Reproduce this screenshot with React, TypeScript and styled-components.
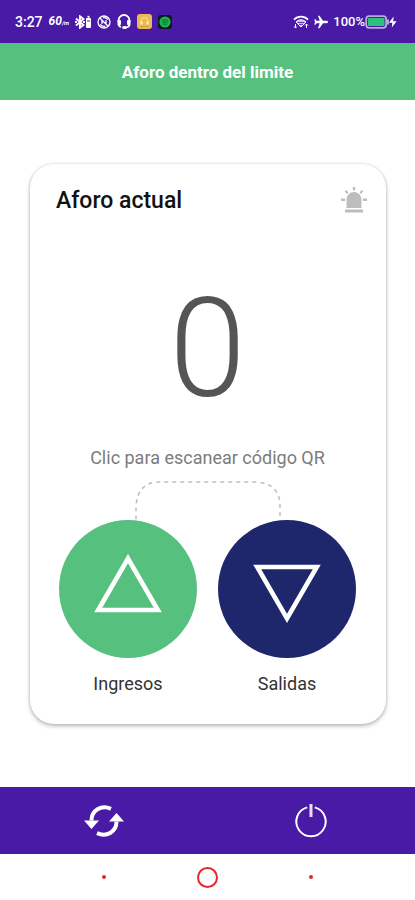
import React from "react";
import styled, { createGlobalStyle } from "styled-components";

const purple = "#481aa6";
const green = "#56c07f";
const navy = "#1e266c";

const GlobalStyle = createGlobalStyle`
  * { box-sizing: border-box; }
  body {
    margin: 0;
    background: #fff;
    font-family: Roboto, "Liberation Sans", sans-serif;
  }
  button {
    padding: 0;
    border: 0;
    background: none;
    font: inherit;
    color: inherit;
    cursor: pointer;
  }
  svg { display: block; flex: none; }
`;

const Screen = styled.div`
  display: flex;
  flex-direction: column;
  min-height: 100vh;
`;

const StatusBar = styled.header`
  display: flex;
  justify-content: space-between;
  align-items: center;
  height: 43px;
  padding: 0 18px 0 15px;
  background: ${purple};
  color: #fff;
`;

const StatusGroup = styled.div<{ $gap: number }>`
  display: flex;
  align-items: center;
  gap: ${(p) => p.$gap}px;
`;

const StatusText = styled.span<{ $size: number; $italic?: boolean }>`
  font-size: ${(p) => p.$size}px;
  line-height: 16px;
  font-weight: ${(p) => (p.$italic ? 700 : 500)};
  font-style: ${(p) => (p.$italic ? "italic" : "normal")};
  small { font-size: 6px; }
`;

const Battery = styled.span`
  display: flex;
  align-items: center;
`;

const Banner = styled.div`
  display: flex;
  align-items: center;
  justify-content: center;
  height: 57px;
  background: ${green};
  color: #fff;
  font-size: 17px;
  line-height: 20px;
  font-weight: 700;
`;

const Main = styled.main`
  display: flex;
  flex: 1;
  flex-direction: column;
  justify-content: center;
  padding: 24px 29px 24px 30px;
`;

const Card = styled.section`
  display: flex;
  flex-direction: column;
  padding: 21px 19px 28px 26px;
  border-radius: 24px;
  background: #fff;
  box-shadow: 0 2px 4px rgba(0, 0, 0, 0.27), 0 0 3px rgba(0, 0, 0, 0.12);
`;

const CardHead = styled.div`
  display: flex;
  align-items: center;
  justify-content: space-between;
`;

const Title = styled.h1`
  margin: 0;
  color: #111;
  font-size: 23px;
  line-height: 32px;
  font-weight: 500;
`;

const CardBody = styled.div`
  display: flex;
  flex-direction: column;
  align-items: center;
  padding-right: 8px;
`;

const Count = styled.output`
  margin-top: 50px;
  color: #555;
  font-size: 138px;
  line-height: 164px;
  font-weight: 300;
`;

const Hint = styled.p`
  margin: 15px 0 11px;
  color: #7c7c7c;
  font-size: 18px;
  line-height: 24px;
`;

const Actions = styled.div`
  display: flex;
  justify-content: center;
  gap: 21px;
`;

const ScanButton = styled.button`
  display: flex;
  flex-direction: column;
  align-items: center;
  gap: 14px;
  color: #333;
  font-size: 18px;
  line-height: 24px;
`;

const Disc = styled.span<{ $color: string }>`
  display: flex;
  align-items: center;
  justify-content: center;
  width: 138px;
  height: 138px;
  border-radius: 50%;
  background: ${(p) => p.$color};
`;

const BottomBar = styled.nav`
  display: grid;
  grid-template-columns: 1fr 1fr;
  height: 67px;
  background: ${purple};
  color: #fff;
`;

const BarButton = styled.button`
  display: flex;
  align-items: center;
  justify-content: center;
`;

const SystemNav = styled.nav`
  display: grid;
  grid-template-columns: repeat(3, 1fr);
  height: 46px;
  padding: 0 12.5%;
`;

const NavMark = styled.span<{ $ring?: boolean }>`
  width: ${(p) => (p.$ring ? 21 : 4)}px;
  height: ${(p) => (p.$ring ? 21 : 4)}px;
  border: 2px solid #e0292d;
  border-radius: 50%;
`;

const BluetoothIcon = () => (
  <svg width="16" height="14" viewBox="1 0 16 14" fill="none" stroke="#fff" strokeWidth="1.9">
    <path d="M2 3.5 9.5 10 6 12.7V1.3L9.5 4 2 10.5" />
    <path d="M1 7h2M9 7h2" />
    <rect x="12" y="3" width="5" height="10" rx="1" fill="#fff" stroke="none" />
    <path d="M13.5 1.8h2" />
    <path d="M13 6h3" stroke={purple} strokeWidth="1" />
  </svg>
);

const NfcOffIcon = () => (
  <svg width="14" height="14" viewBox="0 0 14 14" fill="none" stroke="#fff" strokeWidth="1.3">
    <circle cx="7" cy="7" r="6" />
    <path d="M3 3.2 11 11M5 9V5.2M5 5.2 9 9V5M3.2 9.3c1.2 1.7 3 2.3 5 1.8M10.8 4.7C9.7 3 7.8 2.4 6 2.9" />
  </svg>
);

const HeadsetIcon = () => (
  <svg width="14" height="15" viewBox="0 0 14 15" fill="none" stroke="#fff" strokeWidth="1.8">
    <path d="M1.5 8V6.5a5.5 5.5 0 0 1 11 0V8M12.5 10c0 2.5-2 3.5-4.5 3.5M1.5 10c0 1.5 1 2.5 2.5 3" />
    <rect x="0.5" y="6" width="3.5" height="5" rx="1" fill="#fff" stroke="none" />
    <rect x="10" y="6" width="3.5" height="5" rx="1" fill="#fff" stroke="none" />
    <ellipse cx="7.5" cy="13.4" rx="2.5" ry="1.5" fill="#fff" stroke="none" />
  </svg>
);

const YellowAppIcon = () => (
  <svg width="15" height="15" viewBox="0 0 15 15" fill="none">
    <rect width="15" height="15" rx="3" fill="#e9ba53" />
    <path d="M4.3 8V6.8a3.2 3.2 0 0 1 6.4 0V8" stroke="#f5d68e" strokeWidth="1.2" />
    <path d="M4.4 7.5v3M10.6 7.5v3" stroke="#fff4d2" strokeWidth="2" />
    <path d="M3 12.5h9" stroke="#d99e37" />
  </svg>
);

const MusicAppIcon = () => (
  <svg width="14" height="14" viewBox="0 0 14 14" fill="none">
    <rect width="14" height="14" rx="3" fill="#101a1b" />
    <circle cx="7" cy="7" r="5.6" fill="#16b752" />
    <path d="M3.8 5.2c2.3-.7 4.7-.4 6.5.6M4.2 7.3c1.9-.5 3.8-.3 5.4.6M4.6 9.3c1.5-.4 2.9-.2 4.2.5" stroke="#0c632e" />
  </svg>
);

const WifiIcon = () => (
  <svg width="16" height="14" viewBox="0 0 16 14" fill="none" stroke="#fff">
    <path d="M1 4.7c4-4 10-4 14 0" strokeWidth="1.8" />
    <path d="M3 6.9c3-2.8 7-2.8 10 0L8 12z" fill="#c9b8e6" stroke="#fff" />
    <path d="M4.5 7.5h7M6 9.5h4" stroke={purple} strokeWidth=".8" />
    <path d="M2.5 9v4M1 11.5l1.5 1.5L4 11.5M13.5 13V9M12 10.5 13.5 9l1.5 1.5" />
  </svg>
);

const PlaneIcon = () => (
  <svg width="14" height="14" viewBox="0 0 14 14" fill="#fff">
    <path d="M14 7c0-.8-.7-1.2-1.4-1.2H9L5.5.7H4l1.7 5.1H2.6L1.4 4.2H.3L1 7 .3 9.8h1.1l1.2-1.6h3.1L4 13.3h1.5L9 8.2h3.6C13.3 8.2 14 7.8 14 7z" />
  </svg>
);

const BatteryIcon = () => (
  <svg width="32" height="14" viewBox="0 0 32 14" fill="none">
    <rect x="1.2" y="1.2" width="20" height="11.6" rx="3" stroke="#b9a9e0" strokeWidth="1.8" />
    <rect x="3" y="3" width="16.5" height="8" rx="1" fill="#2ec27c" />
    <path d="M23 4.5v5" stroke="#d9cff0" strokeWidth="1.5" />
    <path d="M28.6 1.5 24 7.8H27.3L26.8 12.5 31.6 6.2H28.2z" fill="#fff" />
  </svg>
);

const SirenIcon = () => (
  <svg width="26" height="28" viewBox="0 0 26 28" fill="#bdbdbd">
    <path d="M5.5 21V12.5a7.5 7.5 0 0 1 15 0V21z" />
    <rect x="4" y="22.5" width="18" height="3" />
    <path d="M11.8 0h2.4v3.2h-2.4zM0 11.5h4v2.500H0zM22 11.5h4v2.5h-4zM3.6 4.3 5.2 3l2.3 2.6L6 7zM20.8 3l1.6 1.3L20 7l-1.5-1.4z" />
  </svg>
);

const DashedLink = () => (
  <svg width="146" height="39" viewBox="0 0 146 39" fill="none" stroke="#bdbdbd" strokeWidth="1.5" strokeDasharray="4 4">
    <path d="M1 38.5V25Q3 1 24 1H122Q145 3 145 25V39" />
  </svg>
);

const Triangle = ({ down = false }: { down?: boolean }) => (
  <svg width="70" height="70" viewBox="0 0 70 70" fill="none" stroke="#fff" strokeWidth="4.6">
    <path d={down ? "M5.2 13H64.8L35 64.5z" : "M5.2 56H64.8L35 4.5z"} />
  </svg>
);

const RefreshIcon = () => (
  <svg width="40" height="32" viewBox="0 0 40 32" fill="none" stroke="#fff" strokeWidth="4">
    <path d="M27 3.8C17-.5 7.5 5.5 7.5 15.5" />
    <path d="M13 28.2C23 32.5 32.5 26.5 32.5 16.5" />
    <path d="M0 15.5H15L7.5 24zM25 16.5H40L32.5 8z" fill="#fff" stroke="none" />
  </svg>
);

const PowerIcon = () => (
  <svg width="32" height="34" viewBox="0 0 32 34" fill="none" stroke="#fff">
    <path d="M12.2 3.4a14.7 14.7 0 1 0 7.6 0" strokeWidth="2" />
    <path d="M16 0v13" strokeWidth="3" stroke="#e7def6" />
  </svg>
);

const scans = [
  { label: "Ingresos", color: green, down: false },
  { label: "Salidas", color: navy, down: true },
];

export default function App() {
  return (
    <Screen>
      <GlobalStyle />
      <StatusBar>
        <StatusGroup $gap={6}>
          <StatusText $size={14}>3:27</StatusText>
          <StatusText $size={12} $italic>60<small>/m</small></StatusText>
          <BluetoothIcon />
          <NfcOffIcon />
          <HeadsetIcon />
          <YellowAppIcon />
          <MusicAppIcon />
        </StatusGroup>
        <StatusGroup $gap={5}>
          <WifiIcon />
          <PlaneIcon />
          <Battery>
            <StatusText $size={13}>100%</StatusText>
            <BatteryIcon />
          </Battery>
        </StatusGroup>
      </StatusBar>
      <Banner role="status">Aforo dentro del limite</Banner>
      <Main>
        <Card>
          <CardHead>
            <Title>Aforo actual</Title>
            <SirenIcon />
          </CardHead>
          <CardBody>
            <Count>0</Count>
            <Hint>Clic para escanear código QR</Hint>
            <DashedLink />
            <Actions>
              {scans.map((s) => (
                <ScanButton key={s.label} type="button">
                  <Disc $color={s.color}>
                    <Triangle down={s.down} />
                  </Disc>
                  {s.label}
                </ScanButton>
              ))}
            </Actions>
          </CardBody>
        </Card>
      </Main>
      <BottomBar>
        <BarButton type="button" aria-label="Actualizar"><RefreshIcon /></BarButton>
        <BarButton type="button" aria-label="Apagar"><PowerIcon /></BarButton>
      </BottomBar>
      <SystemNav>
        <BarButton type="button" aria-label="Recientes"><NavMark /></BarButton>
        <BarButton type="button" aria-label="Inicio"><NavMark $ring /></BarButton>
        <BarButton type="button" aria-label="Volver"><NavMark /></BarButton>
      </SystemNav>
    </Screen>
  );
}
